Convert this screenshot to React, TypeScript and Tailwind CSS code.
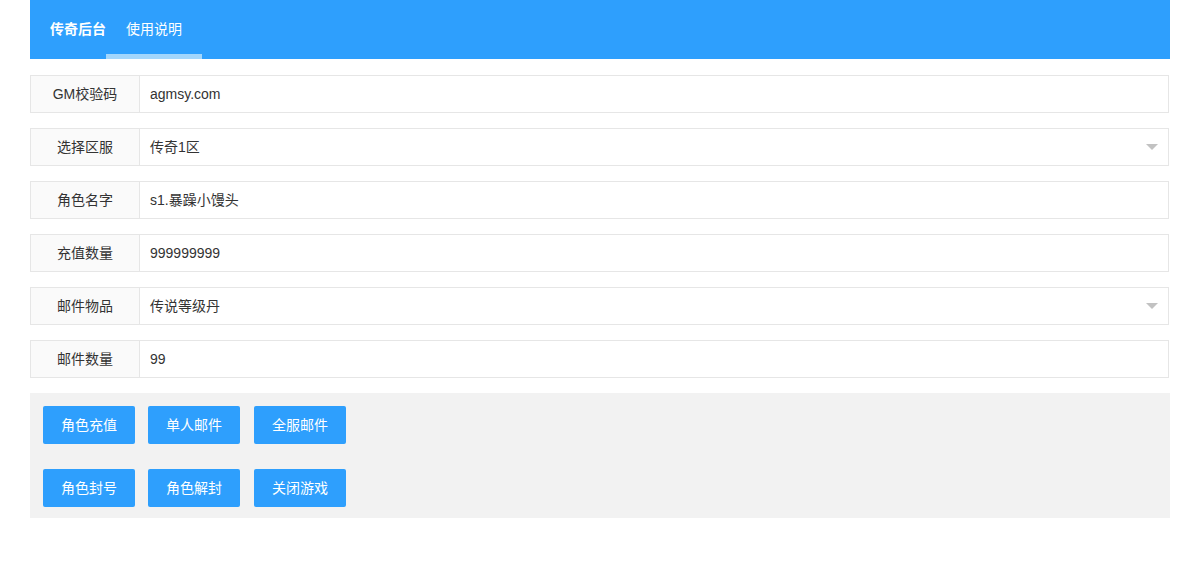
const font = "font-['Liberation_Sans','Noto_Sans_CJK_SC',sans-serif]";

const rows = [
  { label: "GM校验码", value: "agmsy.com" },
  { label: "选择区服", value: "传奇1区", select: true },
  { label: "角色名字", value: "s1.暴躁小馒头" },
  { label: "充值数量", value: "999999999" },
  { label: "邮件物品", value: "传说等级丹", select: true },
  { label: "邮件数量", value: "99" },
];

const buttons = [
  ["角色充值", "单人邮件", "全服邮件"],
  ["角色封号", "角色解封", "关闭游戏"],
];

function FormRow({ label, value, select }: { label: string; value: string; select?: boolean }) {
  return (
    <div className="flex h-[38px] mb-[15px]">
      <div className="w-[110px] shrink-0 flex items-center justify-center border border-[#e6e6e6] bg-[#fafafa] text-[14px] text-[#333]">
        {label}
      </div>
      <div className="flex-1 flex items-center justify-between border border-l-0 border-[#e6e6e6] bg-white pl-[10px] pr-[10px] text-[14px] text-[#333]">
        <span>{value}</span>
        {select && (
          <span className="w-0 h-0 border-x-[6px] border-x-transparent border-t-[6px] border-t-[#c2c2c2]" />
        )}
      </div>
    </div>
  );
}

export default function App() {
  return (
    <div className={`${font} w-[1202px] h-[575px] bg-white pl-[30px] pr-[32px]`}>
      {/* Nav */}
      <div className="flex h-[59px] bg-[#2e9ffd]">
        <div className="flex items-center pl-[20px] text-[14px] font-bold text-white">传奇后台</div>
        <div className="relative flex items-center px-[20px] text-[14px] text-white">
          使用说明
          <span className="absolute left-0 right-0 bottom-0 h-[5px] bg-[#a3d6fc]" />
        </div>
      </div>

      {/* Form */}
      <div className="mt-[16px] pr-[1px]">
        {rows.map((r) => (
          <FormRow key={r.label} {...r} />
        ))}
      </div>

      {/* Buttons */}
      <div className="bg-[#f2f2f2] px-[13px] pt-[13px] pb-[11px] flex flex-col gap-[25px]">
        {buttons.map((line, i) => (
          <div key={i} className="flex gap-[13px]">
            {line.map((b, j) => (
              <button
                key={b}
                className={`h-[38px] w-[92px] rounded-[2px] bg-[#2e9ffd] text-white text-[14px] ${j === 2 ? "ml-[1px]" : ""}`}
              >
                {b}
              </button>
            ))}
          </div>
        ))}
      </div>
    </div>
  );
}
